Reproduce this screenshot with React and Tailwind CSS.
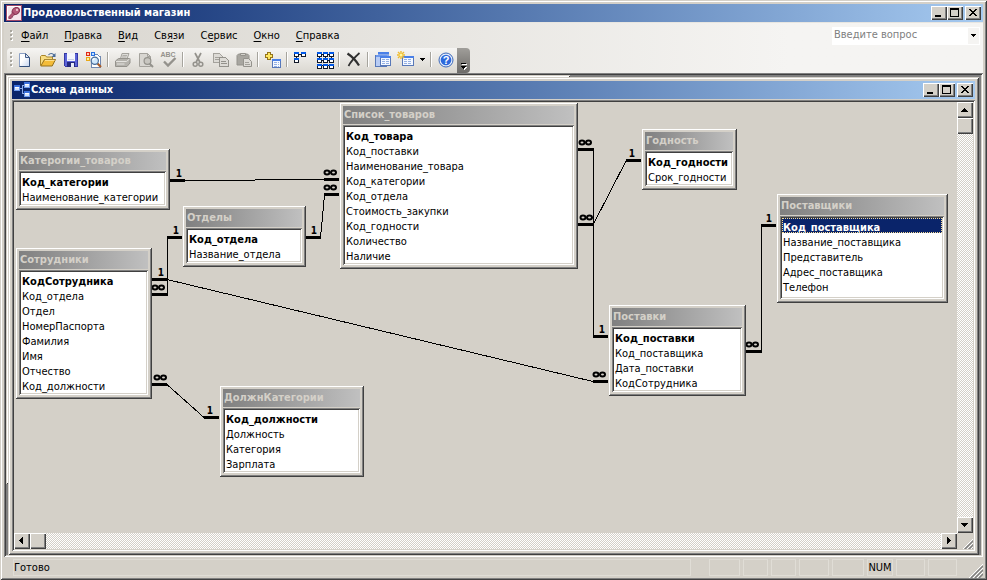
import React from "react";

const RAISED =
  "shadow-[inset_1px_1px_0_#d4d0c8,inset_-1px_-1px_0_#404040,inset_2px_2px_0_#fff,inset_-2px_-2px_0_#808080]";
const BUTTON =
  "bg-[#d4d0c8] shadow-[inset_1px_1px_0_#fff,inset_-1px_-1px_0_#404040,inset_-2px_-2px_0_#808080]";
const SUNKEN =
  "shadow-[inset_1px_1px_0_#808080,inset_-1px_-1px_0_#fff,inset_2px_2px_0_#404040,inset_-2px_-2px_0_#d4d0c8]";
const CHECKER =
  "bg-[repeating-conic-gradient(#fff_0_25%,#d4d0c8_0_50%)] bg-[length:2px_2px]";

/* ---------- window chrome ---------- */

function CaptionButton({ kind, label }) {
  return (
    <button type="button" aria-label={label} className={`h-[14px] w-4 ${BUTTON}`}>
      <svg width="16" height="14" shapeRendering="crispEdges" className="block">
        {kind === "min" && <rect x="4" y="9" width="6" height="2" />}
        {kind === "max" && (
          <path d="M3 2h9v9h-9z M4 4v6h7v-6z" fillRule="evenodd" />
        )}
        {kind === "close" && (
          <path d="M4 3h2v1h1v1h2v-1h1v-1h2v1h-1v1h-1v1h-1v1h1v1h1v1h1v1h-2v-1h-1v-1h-2v1h-1v1h-2v-1h1v-1h1v-1h1v-1h-1v-1h-1v-1h-1z" />
        )}
      </svg>
    </button>
  );
}

function TitleBar({ icon, children }) {
  return (
    <header className="flex h-[18px] shrink-0 items-center bg-linear-to-r from-[#0a246a] to-[#a6caf0] pr-0.5 pl-0.5">
      {icon}
      <h1 className="flex-1 pl-px text-[11px] leading-[18px] font-bold text-white">{children}</h1>
      <CaptionButton kind="min" label="Свернуть" />
      <CaptionButton kind="max" label="Развернуть" />
      <span className="w-0.5" />
      <CaptionButton kind="close" label="Закрыть" />
    </header>
  );
}

function AccessLogo() {
  return (
    <svg width="16" height="16" viewBox="0 0 16 16" className="block shrink-0">
      <rect x=".5" y=".5" width="15" height="15" fill="#f6e6ec" stroke="#a04868" />
      <path d="M1.500 14.500V1.500H14.500" fill="none" stroke="#fff" />
      <ellipse cx="9.800" cy="6" rx="4" ry="3.200" transform="rotate(-35 9.800 6)" fill="#b45878" stroke="#7c2848" />
      <path d="M6.800 7.500 2.800 11.800v1.700h2.400v-1.300h1.400v-1.400L9 9.500z" fill="#b45878" stroke="#7c2848" strokeWidth=".7" />
      <circle cx="11" cy="4.900" r="1.100" fill="#f0c8d4" />
    </svg>
  );
}

function SchemaLogo() {
  return (
    <svg width="16" height="16" viewBox="0 0 16 16" shapeRendering="crispEdges" className="block shrink-0">
      <path d="M6 6.500h2M8.500 3v9M8 3.500h2M8 11.500h2" stroke="#8cacec" fill="none" />
      {[[0, 3], [10, 0], [10, 9]].map(([x, y]) => (
        <g key={`${x}-${y}`}>
          <rect x={x} y={y} width="6" height="6" fill="#6c98ec" />
          <rect x={x} y={y} width="6" height="2" fill="#3c70dc" />
          <rect x={x + 1} y={y + 2} width="4" height="1" fill="#fff" />
          <rect x={x + 1} y={y + 3} width="4" height="2" fill="#d4e2fa" />
        </g>
      ))}
    </svg>
  );
}

function Grip({ className }) {
  return (
    <svg width="14" height="14" className={className} aria-hidden="true">
      {[1, 5, 9].map((n) => (
        <g key={n}>
          <path d={`M${n - 1} 14L14 ${n - 1}`} stroke="#fff" />
          <path d={`M${n + 1} 14L14 ${n + 1}`} stroke="#808080" strokeWidth="1.500" />
        </g>
      ))}
    </svg>
  );
}

/* ---------- menu bar ---------- */

const MENUS = [
  ["", "Ф", "айл"],
  ["", "П", "равка"],
  ["", "В", "ид"],
  ["Св", "я", "зи"],
  ["С", "е", "рвис"],
  ["", "О", "кно"],
  ["", "С", "правка"],
];

function Dots({ rows }) {
  return (
    <svg width="3" height={rows * 4} shapeRendering="crispEdges" className="block shrink-0">
      {Array.from({ length: rows }, (_, i) => (
        <g key={i}>
          <rect x="1" y={i * 4 + 1} width="2" height="2" fill="#fff" />
          <rect x="0" y={i * 4} width="2" height="2" fill="#a9a69e" />
        </g>
      ))}
    </svg>
  );
}

function MenuBar() {
  return (
    <div className="flex h-[26px] shrink-0 items-center border-t border-[#e8e6e1] pr-[3px] pl-1.5">
      <Dots rows={3} />
      <nav className="flex flex-1 items-center">
        {MENUS.map(([a, b, c]) => (
          <button key={a + b + c} type="button" className="px-2 leading-5">
            {a}
            <span className="underline underline-offset-2">{b}</span>
            {c}
          </button>
        ))}
      </nav>
      <div className="flex h-[18px] w-[148px] bg-white p-px">
        <input
          aria-label="Введите вопрос"
          placeholder="Введите вопрос"
          className="min-w-0 flex-1 pl-px text-[11px] outline-none placeholder:text-[#808080] placeholder:opacity-100"
        />
        <button type="button" aria-label="Список вопросов" className="flex w-[11px] items-center justify-center bg-[#f5f4f2]">
          <DownArrow />
        </button>
      </div>
    </div>
  );
}

function DownArrow() {
  return (
    <svg width="5" height="3" shapeRendering="crispEdges" className="block">
      <path d="M0 0h5v1h-1v1h-1v1h-1v-1h-1v-1h-1z" />
    </svg>
  );
}

/* ---------- toolbar ---------- */

function Icon({ children, crisp }) {
  return (
    <svg width="16" height="16" viewBox="0 0 16 16" shapeRendering={crisp ? "crispEdges" : "auto"} className="block overflow-visible">
      {children}
    </svg>
  );
}

function MiniTable({ x, y, w = 9, h = 9 }) {
  return (
    <g shapeRendering="crispEdges">
      <rect x={x} y={y} width={w} height={h} fill="#5878b8" />
      <rect x={x + 1} y={y + 2} width={w - 2} height={h - 3} fill="#f4f8ff" />
      <rect x={x} y={y} width={w} height="2" fill="#4a80e8" />
      <path
        d={`M${x + 2} ${y + 3.5}h${w - 4}M${x + 2} ${y + 5.5}h${w - 4}M${x + 2} ${y + 7.5}h${w - 4}`}
        stroke="#94b0e4"
        strokeDasharray="3 1"
      />
    </g>
  );
}

const NewIcon = () => (
  <Icon>
    <defs>
      <linearGradient id="page" x1="0" y1="0" x2="1" y2="1">
        <stop offset=".4" stopColor="#fff" />
        <stop offset="1" stopColor="#c4d4f0" />
      </linearGradient>
    </defs>
    <path d="M2.500 1.500h6l4 4v9h-10z" fill="url(#page)" stroke="#8ca0c4" />
    <path d="M12.500 5.500v9h-10" fill="none" stroke="#34507c" />
    <path d="M8.500 1.500v4h4z" fill="#dce6f6" stroke="#46608c" />
  </Icon>
);

const OpenIcon = () => (
  <Icon>
    <path d="M.5 13.500v-9l1-1h4l1 1.500h6v3" fill="#f8dc80" stroke="#a88428" />
    <path d="M.8 14 4.500 7.500h11L12.200 14z" fill="#f4bc38" stroke="#94701c" />
    <path d="M5 8.300h9.500" stroke="#ffe8a0" />
    <path d="M8.500 3c1.500-2 4-2 5.500.2" fill="none" stroke="#4a6c98" strokeWidth="1.200" />
    <path d="M15.500 1v4h-4z" fill="#4a6c98" />
  </Icon>
);

const SaveIcon = () => (
  <Icon crisp>
    <path d="M1 1h14v14h-13l-1-1z" fill="#3438a4" />
    <path d="M2 2h12v12h-12z" fill="#5c64d8" />
    <path d="M4 1h8v8h-8z" fill="#f4f6fc" />
    <path d="M5 7h6v1h-6z" fill="#c8d0e8" />
    <path d="M4 10h8v5h-8z" fill="#24287c" />
    <path d="M8 11h3v4h-3z" fill="#e8ecf8" />
  </Icon>
);

const SearchIcon = () => (
  <Icon>
    <g shapeRendering="crispEdges">
      <path d="M5 2h7l3 3v10h-10v-13z" fill="#fff" />
      <path d="M5.500 10v5h9v-10l-3-2.500h-3" fill="none" stroke="#7088b0" />
      <rect x="0" y="0" width="4" height="4" fill="#e02818" />
      <rect x="1" y="1" width="2" height="2" fill="#ffd0b0" />
      <rect x="5" y="0" width="4" height="4" fill="#2870e0" />
      <rect x="6" y="1" width="2" height="2" fill="#c0e0ff" />
      <rect x="0" y="5" width="4" height="4" fill="#e8a818" />
      <rect x="1" y="6" width="2" height="2" fill="#fff0a0" />
    </g>
    <path d="m11.500 11.500 3.500 3.500" stroke="#a85c28" strokeWidth="2.200" />
    <circle cx="8.800" cy="8.800" r="3.600" fill="#d0e8fc" stroke="#486c98" strokeWidth="1.200" />
    <path d="M6.800 8.300c.3-1 1-1.500 1.900-1.600" fill="none" stroke="#fff" strokeWidth="1.200" />
  </Icon>
);

const PrintIcon = () => (
  <Icon>
    <path d="M5.500 6.500 7 1.500h7l-1.800 5z" fill="#deddd9" stroke="#a4a29c" />
    <path d="M7.500 3.500h4.500M7 5h4.500" stroke="#a4a29c" strokeWidth=".8" />
    <path d="M.5 9 3.500 6.500h11.500v4.500l-3 3.500H.5z" fill="#b4b2ac" stroke="#94928c" />
    <path d="M1 9.500h10.500l3-2.500M2 12h7.500" fill="none" stroke="#e4e3df" />
  </Icon>
);

const PreviewIcon = () => (
  <Icon>
    <path d="M1.500 1.500h8l3 3v10h-11z" fill="#d8d6d1" stroke="#a4a29c" />
    <path d="M9.500 1.500v3h3" fill="none" stroke="#a4a29c" />
    <path d="m11.500 11.500 3.500 3.500" stroke="#94928c" strokeWidth="2" />
    <circle cx="9.500" cy="9" r="3.400" fill="#c8c6c0" stroke="#94928c" strokeWidth="1.200" />
  </Icon>
);

const SpellIcon = () => (
  <Icon>
    <text x="-.5" y="5" fontSize="7" fontWeight="bold" fill="#94928c" fontFamily="Liberation Sans, sans-serif">
      ABC
    </text>
    <path d="m3 9.500 4 4L14.500 6" fill="none" stroke="#94928c" strokeWidth="2.400" />
  </Icon>
);

const CutIcon = () => (
  <Icon>
    <path d="M5 1l4.800 9M11 1 6.200 10" stroke="#94928c" strokeWidth="1.700" fill="none" />
    <circle cx="5.200" cy="12.200" r="2" fill="none" stroke="#94928c" strokeWidth="1.500" />
    <circle cx="10.800" cy="12.200" r="2" fill="none" stroke="#94928c" strokeWidth="1.500" />
  </Icon>
);

const CopyIcon = () => (
  <Icon crisp>
    <path d="M.5 1.500h6l3 3v6h-9z" fill="#dddbd6" stroke="#a4a29c" />
    <path d="M2 5.500h5M2 7.500h4" stroke="#a4a29c" />
    <path d="M6.500 5.500h6l3 3v6h-9z" fill="#dddbd6" stroke="#94928c" />
    <path d="M8 9.500h5M8 11.500h6" stroke="#94928c" />
  </Icon>
);

const PasteIcon = () => (
  <Icon>
    <path d="M1 3.500 2.500 2h9L13 3.500V13H1z" fill="#a8a6a0" stroke="#94928c" />
    <path d="M4.500 3.500v-2h5v2z" fill="#d4d2cc" stroke="#94928c" />
    <path d="M7.500 6.500h5l3 3v5h-8z" fill="#dddbd6" stroke="#94928c" />
    <path d="M9 10.500h4M9 12.500h5" stroke="#94928c" strokeWidth=".8" />
  </Icon>
);

const ShowTableIcon = () => (
  <Icon crisp>
    <path d="M2 0h4v2h2v4h-2v2h-4v-2h-2v-4h2z" fill="#94741c" />
    <path d="M3 1h2v2h2v2h-2v2h-2v-2h-2v-2h2z" fill="#ffe860" />
    <MiniTable x={7} y={7} w={9} h={9} />
  </Icon>
);

function Boxes({ at }) {
  return at.map(([x, y]) => (
    <g key={`${x}-${y}`}>
      <rect x={x} y={y} width="5" height="5" fill="#101828" />
      <rect x={x} y={y} width="5" height="2" fill="#0058e8" />
      <rect x={x + 1} y={y + 2} width="3" height="2" fill="#fff" />
    </g>
  ));
}

const DirectIcon = () => (
  <Icon crisp>
    <path d="M4 2.500h3M2.500 4v3" stroke="#101828" />
    <Boxes at={[[0, 0], [7, 0], [0, 6]]} />
  </Icon>
);

const AllRelationsIcon = () => (
  <Icon crisp>
    <path d="M0 2.500h16M0 8.500h16M0 13.500h16" stroke="#101828" />
    <path d="M2.500 5v6M8.500 5v6M14.500 5v6" stroke="#101828" />
    <Boxes at={[[0, 0], [6, 0], [12, 0], [0, 6], [6, 6], [12, 6]]} />
    <Boxes at={[[0, 12], [6, 12], [12, 12]]} />
  </Icon>
);

const DeleteIcon = () => (
  <Icon>
    <path d="M1.500 1.500c4.500 3 8.500 7 11.500 12" fill="none" stroke="#303030" strokeWidth="2.200" />
    <path d="M13.500 1C9 5 5 9 2.500 14" fill="none" stroke="#303030" strokeWidth="1.700" />
  </Icon>
);

const DatabaseIcon = () => (
  <Icon crisp>
    <rect x="3" y="0" width="11" height="10" fill="#88a8e8" />
    <rect x="3" y="0" width="11" height="2" fill="#4a80e8" />
    <rect x="0" y="3" width="12" height="12" fill="#5878b8" />
    <rect x="1" y="3" width="11" height="2" fill="#6c98ec" />
    <rect x="1" y="5" width="10" height="9" fill="#b8ccf4" />
    <MiniTable x={5} y={4} w={11} h={10} />
  </Icon>
);

const NewObjectIcon = () => (
  <Icon>
    <MiniTable x={4} y={4} w={12} h={10} />
    <path d="M3 -1v8M-1 3h8M0 0l6 6M6 0l-6 6" stroke="#f0bc30" strokeWidth="1.400" />
    <circle cx="3" cy="3" r="1.500" fill="#fff8a0" />
  </Icon>
);

const HelpIcon = () => (
  <Icon>
    <circle cx="8" cy="8" r="7" fill="#e4ecfa" stroke="#3c68b8" />
    <circle cx="8" cy="8" r="5.300" fill="#2c68dc" />
    <text x="8" y="12" textAnchor="middle" fontSize="11" fontWeight="bold" fill="#fff" fontFamily="Liberation Sans, sans-serif">
      ?
    </text>
  </Icon>
);

const TOOLS = [
  ["Создать", NewIcon],
  ["Открыть", OpenIcon],
  ["Сохранить", SaveIcon],
  ["Найти", SearchIcon],
  null,
  ["Печать", PrintIcon],
  ["Просмотр", PreviewIcon],
  ["Орфография", SpellIcon],
  null,
  ["Вырезать", CutIcon],
  ["Копировать", CopyIcon],
  ["Вставить", PasteIcon],
  null,
  ["Добавить таблицу", ShowTableIcon],
  null,
  ["Прямые связи", DirectIcon],
  ["Все связи", AllRelationsIcon],
  null,
  ["Удалить", DeleteIcon],
  null,
  ["Окно базы данных", DatabaseIcon],
  ["Новый объект", NewObjectIcon],
  "arrow",
  null,
  ["Справка", HelpIcon],
];

function Toolbar() {
  return (
    <div className="flex h-[25px] shrink-0 pl-[3px]">
      <div className="flex items-center rounded-l-sm bg-linear-to-b from-[#f6f5f3] to-[#dad7d0] pb-0.5 pl-[3px]">
        <Dots rows={4} />
        {TOOLS.map((tool, i) => {
          if (tool === null)
            return <span key={i} className="mx-[2px] h-[15px] w-[2px] border-r border-l border-r-white border-l-[#a6a49d]" />;
          if (tool === "arrow")
            return (
              <button key={i} type="button" aria-label="Выбрать объект" className="flex h-[22px] w-[11px] items-center justify-center">
                <DownArrow />
              </button>
            );
          const [label, Glyph] = tool;
          return (
            <button key={i} type="button" aria-label={label} className="flex h-[22px] w-[23px] items-center justify-center">
              <Glyph />
            </button>
          );
        })}
      </div>
      <button
        type="button"
        aria-label="Параметры панели"
        className="flex w-[13px] items-end justify-center rounded-r-sm bg-linear-to-b from-[#a09e9a] to-[#6e6c69] pb-[3px]"
      >
        <svg width="7" height="8" shapeRendering="crispEdges" className="block">
          <path d="M2 2h5v1h-5zM2 5h5v1h-1v1h-1v1h-1v-1h-1v-1h-1z" fill="#fff" />
          <path d="M1 1h5v1h-5zM1 4h5v1h-1v1h-1v1h-1v-1h-1v-1h-1z" />
        </svg>
      </button>
    </div>
  );
}

/* ---------- relationship diagram ---------- */

const TABLES = [
  {
    name: "Катерогии_товаров",
    place: "left-px top-[46px] w-[155px]",
    fields: ["Код_категории", "Наименование_категории"],
  },
  {
    name: "Отделы",
    place: "left-[168px] top-[103px] w-[124px]",
    fields: ["Код_отдела", "Название_отдела"],
  },
  {
    name: "Сотрудники",
    place: "left-px top-[145px] w-[137px]",
    fields: ["КодСотрудника", "Код_отдела", "Отдел", "НомерПаспорта", "Фамилия", "Имя", "Отчество", "Код_должности"],
  },
  {
    name: "ДолжнКатегории",
    place: "left-[205px] top-[283px] w-[145px]",
    fields: ["Код_должности", "Должность", "Категория", "Зарплата"],
  },
  {
    name: "Список_товаров",
    place: "left-[325px] top-0 w-[239px]",
    fields: [
      "Код_товара",
      "Код_поставки",
      "Наименование_товара",
      "Код_категории",
      "Код_отдела",
      "Стоимость_закупки",
      "Код_годности",
      "Количество",
      "Наличие",
    ],
  },
  {
    name: "Годность",
    place: "left-[627px] top-[26px] w-[96px]",
    fields: ["Код_годности", "Срок_годности"],
  },
  {
    name: "Поставки",
    place: "left-[594px] top-[202px] w-[138px]",
    fields: ["Код_поставки", "Код_поставщика", "Дата_поставки", "КодСотрудника"],
  },
  {
    name: "Поставщики",
    place: "left-[762px] top-[91px] w-[172px]",
    selected: true,
    fields: ["Код_поставщика", "Название_поставщика", "Представитель", "Адрес_поставщика", "Телефон"],
  },
];

function TableBox({ name, place, fields, selected }) {
  return (
    <section className={`absolute bg-[#d4d0c8] p-1 ${RAISED} ${place}`}>
      <h2 className="mb-px h-[18px] bg-linear-to-r from-[#808080] to-[#c0c0c0] pl-px leading-[18px] font-bold whitespace-nowrap text-[#d4d0c8]">
        {name}
      </h2>
      <ul className={`bg-white p-0.5 ${selected ? "pb-1.5" : "pb-[3px]"} ${SUNKEN}`}>
        {fields.map((field, i) => {
          const active = selected && i === 0;
          return (
            <li
              key={field}
              className={`h-[15px] pt-0.5 pl-px leading-[15px] whitespace-nowrap ${i === 0 ? "font-bold" : ""} ${
                active
                  ? "bg-[#0a246a] text-white outline-1 -outline-offset-1 outline-[#f5db95] outline-dotted"
                  : ""
              }`}
            >
              {field}
            </li>
          );
        })}
      </ul>
    </section>
  );
}

const BARS = [
  [170, 179], [324, 178], [167, 236], [152, 278], [152, 293], [306, 236], [324, 193],
  [578, 148], [578, 223], [626, 159], [593, 335], [593, 380], [746, 350], [761, 224],
  [152, 383], [204, 416],
];
const LINKS = [
  "M185 180.500H255M255 179.500H324",
  "M167.500 236V296",
  "M320.500 238L324.500 195",
  "M593.500 148V338",
  "M593.500 224L626.500 160",
  "M167 279.500L593 381.500",
  "M761.500 224V353",
  "M167 384.500L204 417.500",
];
const ONES = [[179, 177], [176, 234], [161, 276], [314, 234], [632, 157], [602, 333], [769, 222], [210, 414]];
const MANY = [[330, 173], [330, 188], [158, 288], [585, 143], [586, 218], [599, 375], [752, 345], [160, 378]];

function Links() {
  return (
    <svg className="absolute inset-0 h-full w-full" aria-hidden="true">
      <g transform="translate(-14 -102)">
        {LINKS.map((d) => (
          <path key={d} d={d} fill="none" stroke="#000" shapeRendering="crispEdges" />
        ))}
        {BARS.map(([x, y]) => (
          <rect key={`${x}-${y}`} x={x} y={y} width="15" height="3" />
        ))}
        {ONES.map(([x, y]) => (
          <text key={`${x}-${y}`} x={x} y={y} textAnchor="middle" fontSize="10" fontWeight="bold">
            1
          </text>
        ))}
        {MANY.map(([x, y]) => (
          <g key={`${x}-${y}`} fill="none" stroke="#000" strokeWidth="2">
            <ellipse cx={x - 3} cy={y - 0.5} rx="2.500" ry="2" />
            <ellipse cx={x + 3.5} cy={y - 0.5} rx="2.500" ry="2" />
          </g>
        ))}
      </g>
    </svg>
  );
}

/* ---------- scroll bars ---------- */

const ARROWS = {
  up: "M7 6h1v1h1v1h1v1h1v1h-7v-1h1v-1h1v-1h1z",
  down: "M4 6h7v1h-1v1h-1v1h-1v1h-1v-1h-1v-1h-1v-1h-1z",
  left: "M9 4v7h-1v-1h-1v-1h-1v-1h-1v-1h1v-1h1v-1h1v-1z",
  right: "M6 4v7h1v-1h1v-1h1v-1h1v-1h-1v-1h-1v-1h-1v-1z",
};

function ScrollButton({ dir, label }) {
  return (
    <button type="button" aria-label={label} className={`size-4 shrink-0 ${BUTTON}`}>
      <svg width="16" height="16" shapeRendering="crispEdges" className="block">
        <path d={ARROWS[dir]} />
      </svg>
    </button>
  );
}

function SchemaWindow() {
  return (
    <section className={`relative flex min-w-0 flex-1 flex-col bg-[#d4d0c8] p-1 ${RAISED}`}>
      <TitleBar icon={<SchemaLogo />}>Схема данных</TitleBar>
      <div className={`mt-px flex min-h-0 flex-1 flex-col p-0.5 ${SUNKEN}`}>
        <div className="flex min-h-0 flex-1">
          <div className="relative min-w-0 flex-1 overflow-hidden">
            <Links />
            {TABLES.map((t) => (
              <TableBox key={t.name} {...t} />
            ))}
          </div>
          <div className={`flex w-4 flex-col ${CHECKER}`}>
            <ScrollButton dir="up" label="Вверх" />
            <div className={`h-4 ${BUTTON}`} />
            <div className="flex-1" />
            <ScrollButton dir="down" label="Вниз" />
          </div>
        </div>
        <div className="flex h-4 shrink-0">
          <div className={`flex flex-1 ${CHECKER}`}>
            <ScrollButton dir="left" label="Влево" />
            <div className={`w-4 ${BUTTON}`} />
            <div className="flex-1" />
            <ScrollButton dir="right" label="Вправо" />
          </div>
          <div className="flex w-4 items-end justify-end">
            <Grip className="block size-3" />
          </div>
        </div>
      </div>
    </section>
  );
}

/* ---------- status bar ---------- */

const PANELS = [
  ["w-[31px]", ""],
  ["w-[25px]", ""],
  ["w-[25px]", ""],
  ["w-[30px]", ""],
  ["w-[32px]", ""],
  ["w-[26px]", "NUM"],
  ["w-[29px]", ""],
  ["w-[29px]", ""],
];

function StatusBar() {
  return (
    <footer className="flex h-[21px] shrink-0 pt-0.5 pl-[9px]">
      <p className="h-[17px] flex-1 border border-[#e0ddd6] leading-[15px]">Готово</p>
      <div className="ml-[18px] flex gap-[3px]">
        {PANELS.map(([width, text], i) => (
          <span key={i} className={`h-[17px] border border-[#e0ddd6] text-center leading-[15px] ${width}`}>
            {text}
          </span>
        ))}
      </div>
      <div className="flex w-[26px] items-end justify-end">
        <Grip className="block" />
      </div>
    </footer>
  );
}

export default function App() {
  return (
    <div
      className={`flex h-screen w-full flex-col bg-[#d4d0c8] px-1 pt-1 pb-0.5 font-['Tahoma','DejaVu_Sans_Condensed','DejaVu_Sans',sans-serif] text-[11px] text-black ${RAISED}`}
    >
      <TitleBar icon={<AccessLogo />}>Продовольственный магазин</TitleBar>
      <div className="flex shrink-0 flex-col bg-linear-to-r from-[#d8d5ce] to-[#f5f4f2] to-80%">
        <MenuBar />
        <Toolbar />
      </div>
      <main className={`relative flex min-h-0 flex-1 bg-[#808080] pt-1 pr-1 pb-0.5 pl-1 ${SUNKEN}`}>
        <div className={`absolute top-0.5 left-0.5 h-[409px] w-[564px] bg-[#d4d0c8] ${RAISED}`} />
        <SchemaWindow />
      </main>
      <StatusBar />
    </div>
  );
}
